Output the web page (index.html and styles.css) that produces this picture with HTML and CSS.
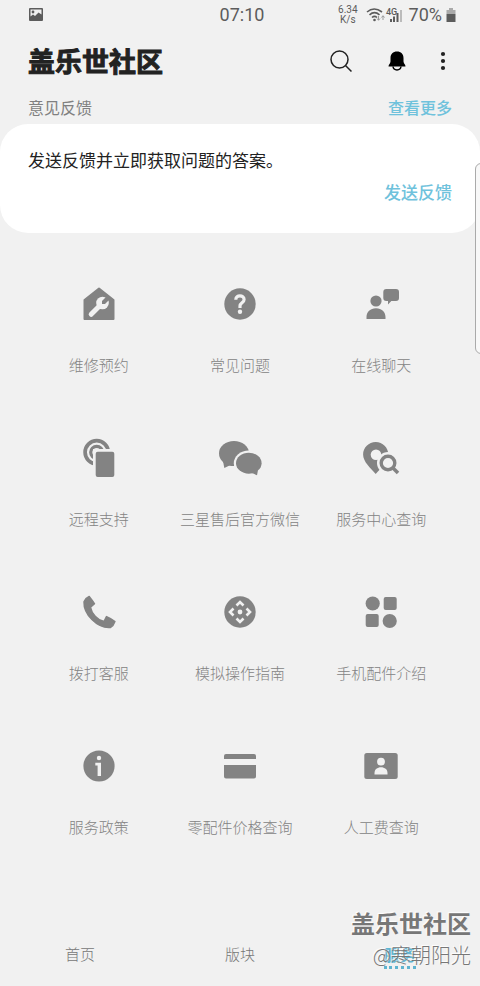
FILE: index.html
```html
<!DOCTYPE html>
<html lang="zh-CN">
<head>
<meta charset="utf-8">
<meta name="viewport" content="width=device-width, initial-scale=1">
<title>盖乐世社区</title>
<link rel="stylesheet" href="styles.css">
</head>
<body>
<div class="app">
  <div class="status">
    <div class="status-left">
      <svg width="16" height="16" viewBox="0 0 16 16"><path fill="#5c5c5c" fill-rule="evenodd" d="M2 1h12a1 1 0 0 1 1 1v11a1 1 0 0 1-1 1H2a1 1 0 0 1-1-1V2a1 1 0 0 1 1-1zM2.500 2.500v7l2.500-2 2 1.500 3.500-3.500 3 2V2.500z"/><circle cx="5" cy="5" r="1.400" fill="#5c5c5c"/></svg>
    </div>
    <time class="clock">07:10</time>
    <div class="status-right">
      <span class="rate">6.34<br>K/s</span>
      <svg class="signals" width="36" height="18" viewBox="0 0 36 18">
        <g fill="none" stroke="#5c5c5c" stroke-width="1.600"><path d="M1 6q7-6 15 0"/><path d="M3.500 8.800q5-4.300 10 0"/><path d="M6 11.500q2.500-2.200 5 0"/></g>
        <circle cx="8.500" cy="14" r="1.300" fill="#5c5c5c"/>
        <path d="M12.500 10v4m-1.500-1.500 1.500 1.800 1.500-1.800M17 14v-4m-1.500 1.500L17 9.700l1.500 1.800" fill="none" stroke="#999"/>
        <path d="M25 16v-3M28 16v-5.500M31.500 16V7" stroke="#5c5c5c" stroke-width="2"/><path d="M35 16V4" stroke="#bbb" stroke-width="2"/>
        <text x="20" y="9" class="net">4G</text>
      </svg>
      <span class="percent">70%</span>
      <svg width="10" height="16" viewBox="0 0 10 16"><path fill="#aaa" d="M3 1h4v2h2.500v4h-9V3H3z"/><path fill="#5c5c5c" d="M0.500 7h9v8h-9z"/></svg>
    </div>
  </div>

  <header class="header">
    <h1>盖乐世社区</h1>
    <div class="actions">
      <button type="button" aria-label="搜索"><svg width="24" height="24" viewBox="0 0 24 24"><g fill="none" stroke="#222" stroke-width="1.500"><circle cx="10.500" cy="10.500" r="8.500"/><path d="m16.500 16.500 6 6"/></g></svg></button>
      <button type="button" aria-label="通知"><svg width="24" height="24" viewBox="0 0 24 24"><path fill="#000" d="M12 2.500c4 0 6.500 2.500 6.500 6.500v3.500c0 2 2 2.800 2 5H3.500c0-2.200 2-3 2-5V9C5.500 5 8 2.500 12 2.500z"/><path d="M8 17.500c.5 4.500 7.500 4.500 8 0" fill="none" stroke="#000" stroke-width="1.500"/></svg></button>
      <button type="button" class="more" aria-label="更多选项"><svg width="8" height="24" viewBox="0 0 8 24"><g fill="#222"><circle cx="4" cy="5" r="2.100"/><circle cx="4" cy="12" r="2.100"/><circle cx="4" cy="19" r="2.100"/></g></svg></button>
    </div>
  </header>

  <main>
    <div class="section-head"><h2>意见反馈</h2><a href="#more">查看更多</a></div>
    <section class="card">
      <p>发送反馈并立即获取问题的答案。</p>
      <a href="#send">发送反馈</a>
    </section>

    <div class="grid">
      <a class="tile" href="#repair"><svg viewBox="0 0 48 48"><path d="M24 8.500 38.500 20v19h-29V20z" fill="currentColor" stroke="currentColor" stroke-width="2" stroke-linejoin="round"/><path class="cut-line" stroke-width="5" stroke-linecap="round" d="M16.200 34.300 26 24.500"/><circle class="cut" cx="27.500" cy="23" r="6.300"/><path d="m27 21 5.500-5.500 3 3L30 24h-3z" fill="currentColor"/></svg><span>维修预约</span></a>
      <a class="tile" href="#faq"><svg viewBox="0 0 48 48"><circle cx="24" cy="24" r="15.700" fill="currentColor"/><path class="cut-line" stroke-width="3.200" d="M19.800 19.800c0-5.400 8.300-5.200 8.300-.3 0 3.300-4.100 3.300-4.100 6.500v2"/><circle class="cut" cx="24" cy="31.800" r="2.200"/></svg><span>常见问题</span></a>
      <a class="tile" href="#chat"><svg viewBox="0 0 48 48"><g fill="currentColor"><circle cx="19" cy="21" r="5.600"/><path d="M9.500 39v-2c0-5 3.800-8.700 9.500-8.700s9.500 3.700 9.500 8.700v2zM29.300 9H39a3 3 0 0 1 3 3v6a3 3 0 0 1-3 3h-4.700L31 24.500V21h-1.700a3 3 0 0 1-3-3v-6a3 3 0 0 1 3-3z"/></g></svg><span>在线聊天</span></a>

      <a class="tile" href="#remote"><svg viewBox="0 0 48 48"><circle cx="21.700" cy="18.300" r="11.600" fill="none" stroke="currentColor" stroke-width="3.700"/><circle cx="21.700" cy="18.300" r="6" fill="none" stroke="currentColor" stroke-width="3.200"/><path class="cut" d="M18 15h26v31H18z"/><rect x="20.700" y="17.700" width="18.600" height="25.300" rx="2" fill="currentColor"/></svg><span>远程支持</span></a>
      <a class="tile" href="#wechat"><svg viewBox="0 0 48 48"><path fill="currentColor" d="m7 27 1.300 7 6.200-3z"/><ellipse cx="18" cy="19.500" rx="15" ry="12.600" fill="currentColor"/><ellipse class="cut" cx="32.800" cy="29.200" rx="15" ry="12.700"/><ellipse cx="32.800" cy="29.200" rx="12.800" ry="10.500" fill="currentColor"/><path fill="currentColor" d="m42 36-1 5.200-5-2.200z"/></svg><span>三星售后官方微信</span></a>
      <a class="tile" href="#centers"><svg viewBox="0 0 48 48"><path fill="currentColor" d="M18.700 8c7 0 12.600 5.600 12.600 12.500 0 8-7.500 13.500-12.600 19.500-5-6-12.600-12-12.600-19.500C6.100 13.600 11.700 8 18.700 8z"/><circle class="cut" cx="19" cy="20.700" r="5.300"/><circle class="cut" cx="31" cy="29" r="11"/><path fill="none" stroke="currentColor" stroke-width="3.600" d="m35.500 33.500 5.500 5.500"/><circle cx="31" cy="29" r="6.800" fill="none" stroke="currentColor" stroke-width="3.400"/></svg><span>服务中心查询</span></a>

      <a class="tile" href="#call"><svg viewBox="0 0 48 48"><path fill="currentColor" stroke="currentColor" stroke-width="1.500" stroke-linejoin="round" d="M14.200 8.500c1.500 2 4 5 5.300 7.300l-4 3.500c1 6 7 13 13.500 14.300l2.500-5c2.500 1 6.500 3.300 8.400 5-.6 2-2.600 4.800-4.600 5.900C22 40.500 8.500 26 9 13.700c1-2.200 3.200-4.400 5.200-5.200z"/></svg><span>拨打客服</span></a>
      <a class="tile" href="#guide"><svg viewBox="0 0 48 48"><circle cx="24" cy="24" r="15.700" fill="currentColor"/><circle class="cut" cx="24" cy="24" r="2.400"/><path class="cut-line" stroke-width="2.600" d="m20.500 17.500 3.500-3.500 3.500 3.500m3 3 3.500 3.500-3.500 3.500m-3 3L24 34l-3.500-3.500m-3-3L14 24l3.500-3.500"/></svg><span>模拟操作指南</span></a>
      <a class="tile" href="#parts"><svg viewBox="0 0 48 48"><g fill="currentColor"><circle cx="15.700" cy="15.500" r="7.100"/><rect x="26.700" y="9" width="13" height="13" rx="2"/><rect x="8.700" y="26" width="13" height="13" rx="2"/><circle cx="32.700" cy="33" r="7.100"/></g></svg><span>手机配件介绍</span></a>

      <a class="tile" href="#policy"><svg viewBox="0 0 48 48"><circle cx="24" cy="24" r="15.600" fill="currentColor"/><circle class="cut" cx="24" cy="16" r="2.200"/><path class="cut" d="M20.300 20.700H26V34h-3.400V23.500h-2.300z"/></svg><span>服务政策</span></a>
      <a class="tile" href="#prices"><svg viewBox="0 0 48 48"><path fill="currentColor" d="M10 12h28a2 2 0 0 1 2 2v3H8v-3a2 2 0 0 1 2-2zM8 23h32v11.500a2 2 0 0 1-2 2H10a2 2 0 0 1-2-2z"/></svg><span>零配件价格查询</span></a>
      <a class="tile" href="#labor"><svg viewBox="0 0 48 48"><rect x="7.300" y="11" width="33.400" height="26" rx="2.500" fill="currentColor"/><circle class="cut" cx="24" cy="19.700" r="3.900"/><path class="cut" d="M17.500 32.500V31c0-3.500 2.800-5.700 6.500-5.700s6.500 2.200 6.500 5.700v1.500z"/></svg><span>人工费查询</span></a>
    </div>
  </main>

  <nav class="tabs">
    <a href="#home">首页</a>
    <a href="#boards">版块</a>
    <a href="#service" class="active" aria-current="page">服务</a>
  </nav>

  <div class="edge-panel"></div>
  <div class="watermark"><strong>盖乐世社区</strong><span>@寒朝阳光</span></div>
</div>
</body>
</html>
```
FILE: styles.css
```css
* { box-sizing: border-box; }

body {
  margin: 0;
  background: #f1f1f1;
  color: #222;
  font-family: "Noto Sans CJK SC", sans-serif;
}

h1, h2, p { margin: 0; }
a { color: inherit; text-decoration: none; }
svg { display: block; }

.app {
  position: relative;
  display: flex;
  flex-direction: column;
  min-height: 100vh;
  overflow: hidden;
}

.status {
  display: grid;
  grid-template-columns: 1fr auto 1fr;
  align-items: center;
  height: 29px;
  padding: 0 24px 0 28px;
  color: #5c5c5c;
  font-family: Roboto, sans-serif;
  font-size: 18px;
}

.status-right {
  display: flex;
  align-items: center;
  justify-content: flex-end;
  gap: 4px;
}

.rate {
  font-size: 10px;
  line-height: 10px;
  text-align: center;
}

.signals { margin: 0 3px 0 4px; }
.net { font-size: 9px; font-weight: 500; fill: #5c5c5c; }

.header {
  display: flex;
  align-items: center;
  justify-content: space-between;
  height: 63px;
  padding: 0 28px;
}

h1 {
  font-size: 27px;
  font-weight: 700;
  line-height: 40px;
  -webkit-text-stroke: 1px #222;
}

.actions { display: flex; gap: 32px; }

.actions button {
  padding: 0;
  border: 0;
  background: none;
}

.actions .more { margin: 0 5px 0 -2px; }

.section-head {
  display: flex;
  align-items: flex-start;
  justify-content: space-between;
  height: 32px;
  padding: 3px 28px 0;
  font-size: 16px;
  line-height: 24px;
}

h2 {
  color: #808080;
  font-size: 16px;
  font-weight: 400;
}

.section-head a, .card a { color: #6fc2dc; font-weight: 500; }

.card {
  display: flex;
  flex-direction: column;
  gap: 8px;
  padding: 24px 28px 29px;
  border-radius: 28px;
  background: #fff;
  font-size: 17px;
  line-height: 24px;
}

.card a { align-self: flex-end; }

.grid {
  display: grid;
  grid-template-columns: repeat(3, 1fr);
  padding: 0 28px;
}

.tile {
  display: flex;
  flex-direction: column;
  align-items: center;
  gap: 26px;
  padding: 47px 0 11px;
  color: #838383;
  font-size: 15px;
  font-weight: 300;
  line-height: 22px;
  white-space: nowrap;
}

.tile svg { width: 48px; height: 48px; }
.cut { fill: #f1f1f1; }
.cut-line { fill: none; stroke: #f1f1f1; }

.tabs {
  display: grid;
  grid-template-columns: repeat(3, 1fr);
  align-items: start;
  margin-top: auto;
  padding-bottom: 17px;
  color: #777;
  font-size: 15px;
  font-weight: 300;
  line-height: 24px;
}

.tabs a { justify-self: center; }

.tabs .active {
  border-bottom: 3px dotted #5fb4d0;
  color: #5fb4d0;
  font-size: 16px;
  font-weight: 700;
}

.edge-panel {
  position: absolute;
  top: 163px;
  right: -8px;
  width: 13px;
  height: 191px;
  border: 1px solid #aaa;
  border-radius: 6px;
  background: #f8f8f8;
}

.watermark {
  position: absolute;
  right: 9px;
  bottom: 16px;
  display: flex;
  flex-direction: column;
  align-items: flex-end;
  color: #777;
  text-shadow: -1px -1px 1px #fff;
  pointer-events: none;
}

.watermark strong { font-size: 24px; line-height: 34px; }
.watermark span { font-size: 20px; font-weight: 300; line-height: 30px; }
```
